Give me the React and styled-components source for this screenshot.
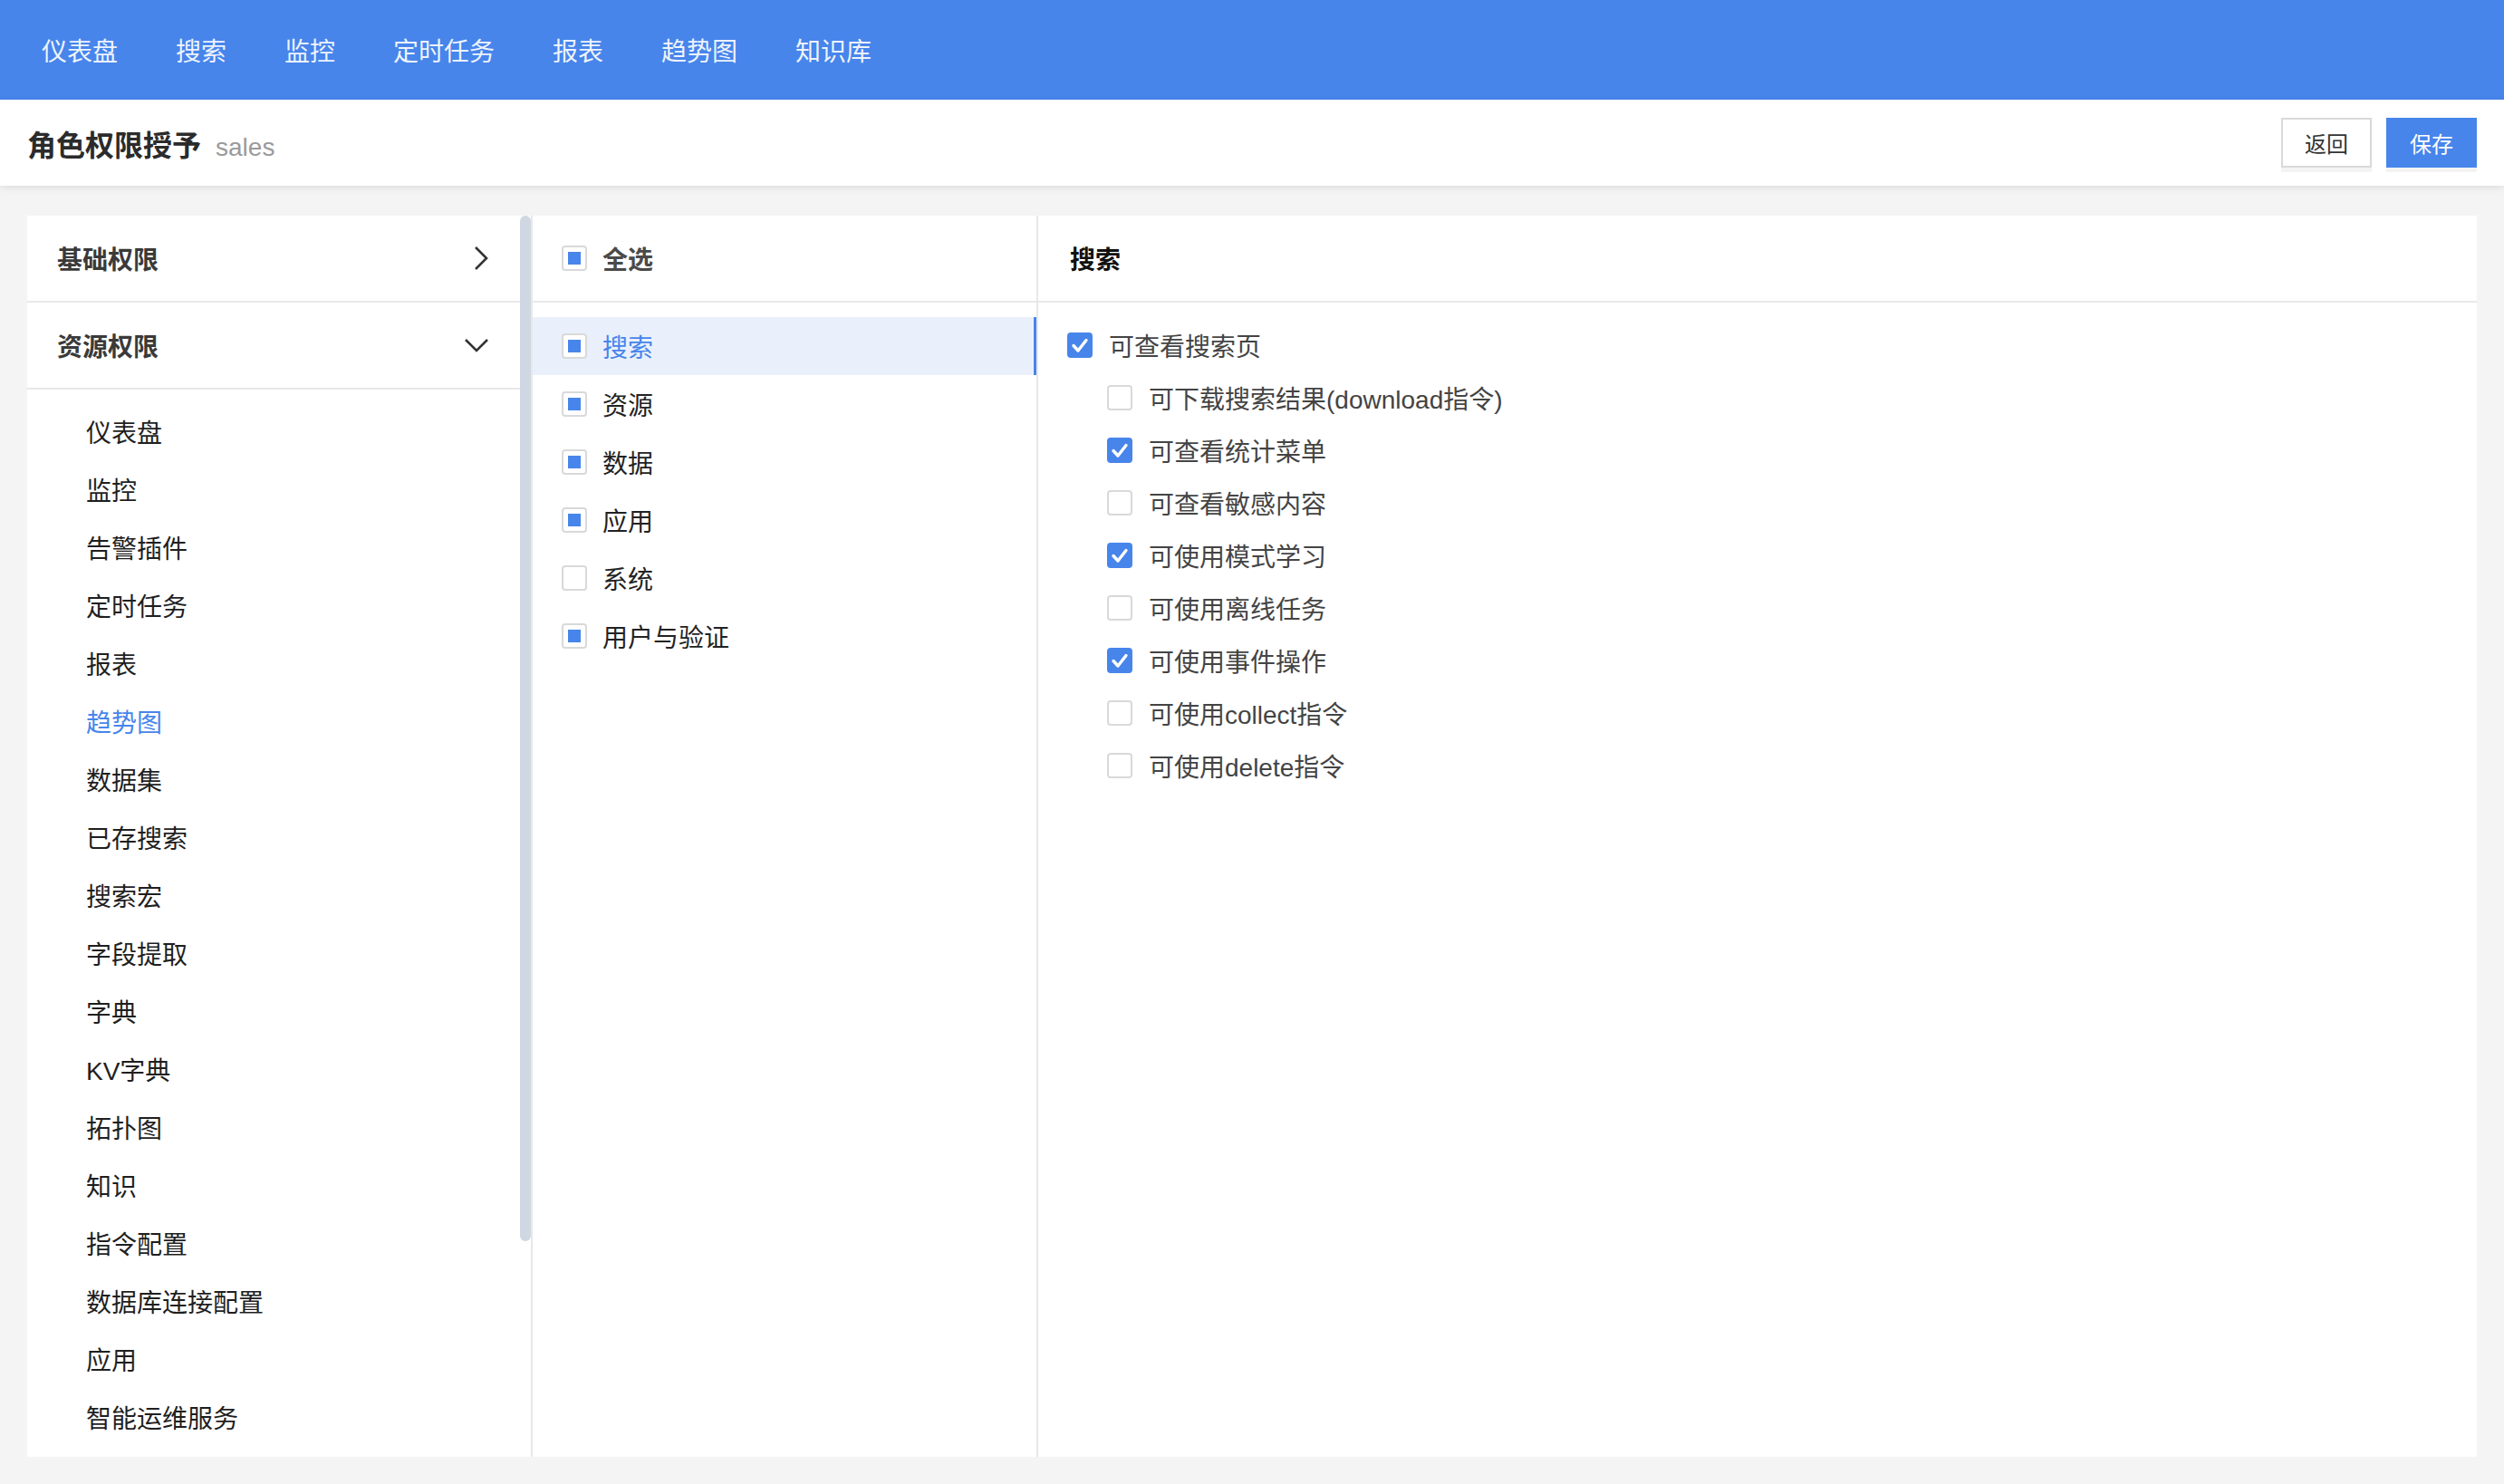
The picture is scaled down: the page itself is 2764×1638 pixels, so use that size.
import styled, { createGlobalStyle } from "styled-components";

const BLUE = "#4785eb";

const GlobalStyle = createGlobalStyle`
  * { box-sizing: border-box; }
  body {
    margin: 0;
    background: #f4f4f4;
    font-family: "Liberation Sans", "Noto Sans CJK SC", sans-serif;
    color: #333;
  }
`;

const Page = styled.div`
  display: flex;
  flex-direction: column;
  height: 100vh;
`;

const TopNav = styled.nav`
  display: flex;
  align-items: center;
  gap: 64px;
  height: 110px;
  padding-left: 46px;
  background: ${BLUE};
  flex-shrink: 0;
`;

const NavItem = styled.a`
  font-size: 28px;
  color: rgba(255, 255, 255, 0.92);
  cursor: pointer;
`;

const SubHeader = styled.header`
  position: relative;
  z-index: 1;
  display: flex;
  align-items: center;
  justify-content: space-between;
  height: 95px;
  padding: 0 30px;
  background: #fff;
  box-shadow: 0 2px 8px rgba(0, 0, 0, 0.1);
  flex-shrink: 0;
`;

const TitleGroup = styled.div`
  display: flex;
  align-items: baseline;
  gap: 16px;
`;

const Title = styled.h1`
  margin: 0;
  font-size: 32px;
  font-weight: 600;
  color: #2b2b2b;
`;

const RoleName = styled.span`
  font-size: 28px;
  color: #9a9a9a;
`;

const Actions = styled.div`
  display: flex;
  gap: 16px;
`;

const Button = styled.button`
  width: 100px;
  height: 55px;
  font-family: inherit;
  font-size: 24px;
  border-radius: 0;
  cursor: pointer;
  box-shadow: 0 5px 0 #f3f3f3;
  border: 2px solid ${(p) => (p.$primary ? BLUE : "#d9d9d9")};
  background: ${(p) => (p.$primary ? BLUE : "#fff")};
  color: ${(p) => (p.$primary ? "#fff" : "#333")};
`;

const Main = styled.main`
  flex: 1;
  min-height: 0;
  padding: 33px 30px 30px;
`;

const Panel = styled.div`
  display: flex;
  height: 100%;
  background: #fff;
`;

const LeftColumn = styled.div`
  display: flex;
  width: 558px;
  flex-shrink: 0;
  border-right: 2px solid #e8e8e8;
`;

const LeftScroll = styled.div`
  flex: 1;
  min-width: 0;
  overflow: hidden;
`;

const ScrollTrack = styled.div`
  width: 12px;
  flex-shrink: 0;
`;

const ScrollThumb = styled.div`
  height: 82.6%;
  border-radius: 6px;
  background: #cfd8e2;
`;

const GroupHeader = styled.div`
  display: flex;
  align-items: center;
  justify-content: space-between;
  height: 96px;
  padding: 0 34px 0 33px;
  border-bottom: 2px solid #e8e8e8;
  font-size: 28px;
  font-weight: 600;
  color: #3a3a3a;
  cursor: pointer;
`;

const ResourceList = styled.ul`
  list-style: none;
  margin: 0;
  padding: 14px 0 0;
`;

const ResourceItem = styled.li`
  display: flex;
  align-items: center;
  height: 64px;
  padding-left: 65px;
  font-size: 28px;
  color: ${(p) => (p.$active ? BLUE : "#1f1f1f")};
  cursor: pointer;
`;

const MiddleColumn = styled.div`
  width: 558px;
  flex-shrink: 0;
  border-right: 2px solid #e8e8e8;
`;

const ColumnHeader = styled.div`
  display: flex;
  align-items: center;
  gap: 17px;
  height: 96px;
  padding-left: ${(p) => p.$indent || 32}px;
  border-bottom: 2px solid #e8e8e8;
  font-size: 28px;
  font-weight: ${(p) => (p.$strong ? 700 : 600)};
  color: ${(p) => (p.$strong ? "#111" : "#4a4a4a")};
`;

const CategoryList = styled.div`
  padding-top: 16px;
`;

const CategoryRow = styled.div`
  display: flex;
  align-items: center;
  gap: 17px;
  height: 64px;
  padding-left: 32px;
  font-size: 28px;
  cursor: pointer;
  color: ${(p) => (p.$active ? BLUE : "#222")};
  background: ${(p) => (p.$active ? "#e9f0fc" : "transparent")};
  box-shadow: ${(p) => (p.$active ? `inset -3px 0 0 ${BLUE}` : "none")};
`;

const RightColumn = styled.div`
  flex: 1;
  min-width: 0;
`;

const PermissionList = styled.div`
  padding-top: 18px;
`;

const PermissionRow = styled.label`
  display: flex;
  align-items: center;
  gap: 18px;
  height: 58px;
  padding-left: ${(p) => (p.$child ? 76 : 32)}px;
  font-size: 28px;
  color: #444;
  cursor: pointer;
`;

const Box = styled.span`
  display: inline-flex;
  align-items: center;
  justify-content: center;
  width: 28px;
  height: 28px;
  flex-shrink: 0;
  border-radius: 4px;
  border: 2px solid ${(p) => (p.$state === "checked" ? BLUE : "#d9d9d9")};
  background: ${(p) => (p.$state === "checked" ? BLUE : "#fff")};
`;

const Dot = styled.span`
  width: 14px;
  height: 14px;
  background: ${BLUE};
`;

function Checkbox({ state }) {
  return (
    <Box $state={state}>
      {state === "checked" && (
        <svg width="22" height="22" viewBox="0 0 22 22">
          <path
            d="M4 11.5 L9 17 L18 5.5"
            fill="none"
            stroke="#fff"
            strokeWidth="3.4"
            strokeLinecap="round"
            strokeLinejoin="round"
          />
        </svg>
      )}
      {state === "indeterminate" && <Dot />}
    </Box>
  );
}

function ChevronRight() {
  return (
    <svg width="18" height="28" viewBox="0 0 18 28">
      <polyline
        points="3,2 15,14 3,26"
        fill="none"
        stroke="#333"
        strokeWidth="2.6"
      />
    </svg>
  );
}

function ChevronDown() {
  return (
    <svg width="28" height="18" viewBox="0 0 28 18">
      <polyline
        points="2,3 14,15 26,3"
        fill="none"
        stroke="#333"
        strokeWidth="2.6"
      />
    </svg>
  );
}

const navItems = ["仪表盘", "搜索", "监控", "定时任务", "报表", "趋势图", "知识库"];

const resources = [
  "仪表盘",
  "监控",
  "告警插件",
  "定时任务",
  "报表",
  "趋势图",
  "数据集",
  "已存搜索",
  "搜索宏",
  "字段提取",
  "字典",
  "KV字典",
  "拓扑图",
  "知识",
  "指令配置",
  "数据库连接配置",
  "应用",
  "智能运维服务",
];

const categories = [
  { name: "搜索", state: "indeterminate", active: true },
  { name: "资源", state: "indeterminate" },
  { name: "数据", state: "indeterminate" },
  { name: "应用", state: "indeterminate" },
  { name: "系统", state: "none" },
  { name: "用户与验证", state: "indeterminate" },
];

const permissions = [
  { label: "可查看搜索页", checked: true },
  { label: "可下载搜索结果(download指令)", checked: false, child: true },
  { label: "可查看统计菜单", checked: true, child: true },
  { label: "可查看敏感内容", checked: false, child: true },
  { label: "可使用模式学习", checked: true, child: true },
  { label: "可使用离线任务", checked: false, child: true },
  { label: "可使用事件操作", checked: true, child: true },
  { label: "可使用collect指令", checked: false, child: true },
  { label: "可使用delete指令", checked: false, child: true },
];

export default function App() {
  return (
    <Page>
      <GlobalStyle />
      <TopNav>
        {navItems.map((item) => (
          <NavItem key={item}>{item}</NavItem>
        ))}
      </TopNav>

      <SubHeader>
        <TitleGroup>
          <Title>角色权限授予</Title>
          <RoleName>sales</RoleName>
        </TitleGroup>
        <Actions>
          <Button>返回</Button>
          <Button $primary>保存</Button>
        </Actions>
      </SubHeader>

      <Main>
        <Panel>
          <LeftColumn>
            <LeftScroll>
              <GroupHeader>
                基础权限
                <ChevronRight />
              </GroupHeader>
              <GroupHeader>
                资源权限
                <ChevronDown />
              </GroupHeader>
              <ResourceList>
                {resources.map((r) => (
                  <ResourceItem key={r} $active={r === "趋势图"}>
                    {r}
                  </ResourceItem>
                ))}
              </ResourceList>
            </LeftScroll>
            <ScrollTrack>
              <ScrollThumb />
            </ScrollTrack>
          </LeftColumn>

          <MiddleColumn>
            <ColumnHeader>
              <Checkbox state="indeterminate" />
              全选
            </ColumnHeader>
            <CategoryList>
              {categories.map((c) => (
                <CategoryRow key={c.name} $active={c.active}>
                  <Checkbox state={c.state} />
                  {c.name}
                </CategoryRow>
              ))}
            </CategoryList>
          </MiddleColumn>

          <RightColumn>
            <ColumnHeader $strong $indent={35}>
              搜索
            </ColumnHeader>
            <PermissionList>
              {permissions.map((p) => (
                <PermissionRow key={p.label} $child={p.child}>
                  <Checkbox state={p.checked ? "checked" : "none"} />
                  {p.label}
                </PermissionRow>
              ))}
            </PermissionList>
          </RightColumn>
        </Panel>
      </Main>
    </Page>
  );
}
